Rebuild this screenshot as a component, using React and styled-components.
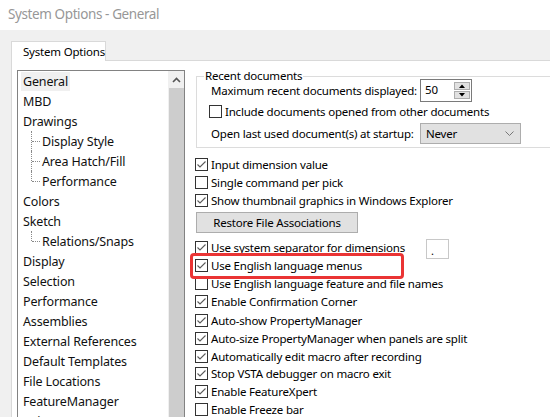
import React from 'react';
import styled, { createGlobalStyle, css } from 'styled-components';

const Global = createGlobalStyle`
  html, body { margin: 0; padding: 0; background: #fff; }
  body { font-family: "Noto Sans", "Segoe UI", sans-serif; color: #000; }
  #root { width: 550px; height: 417px; overflow: hidden; }
`;

const Window = styled.div`
  width: 550px;
  height: 417px;
  display: flex;
  flex-direction: column;
  overflow: hidden;
  background: #fff;
`;

const TitleBar = styled.div`
  height: 30px;
  flex: none;
  display: flex;
  align-items: center;
  padding-left: 8px;
  padding-bottom: 2px;
  box-sizing: border-box;
  color: #979797;
  font-size: 13.5px;
  letter-spacing: -0.4px;
`;

const Body = styled.div`
  flex: 1;
  min-height: 0;
  background: #f0f0f0;
  padding: 11px 0 0 11px;
  display: flex;
  flex-direction: column;
`;

const TabRow = styled.div`
  display: flex;
  height: 20px;
  flex: none;
`;

const Tab = styled.div`
  width: 95px;
  box-sizing: border-box;
  background: #fff;
  border: 1px solid #d9d9d9;
  border-bottom: none;
  padding-left: 11px;
  font-size: 11.5px;
  letter-spacing: -0.2px;
  line-height: 19px;
  white-space: nowrap;
`;

const TabFill = styled.div`
  flex: 1;
  border-bottom: 1px solid #d9d9d9;
`;

const Panel = styled.div`
  flex: 1;
  min-height: 0;
  background: #fff;
  border-left: 1px solid #d9d9d9;
  display: flex;
  padding: 9px 0 0 5px;
  gap: 10px;
`;

const TreeBox = styled.div`
  width: 168px;
  flex: none;
  box-sizing: border-box;
  border: 1px solid #828282;
  border-bottom: none;
  display: flex;
`;

const TreeItems = styled.div`
  flex: 1;
  display: flex;
  flex-direction: column;
`;

const TreeItem = styled.div`
  position: relative;
  height: 20px;
  flex: none;
  display: flex;
  align-items: center;
  padding-left: ${(p) => (p.$child ? 22 : 3)}px;
  font-size: 12.5px;
  letter-spacing: -0.15px;
  color: #111;
  white-space: nowrap;
  ${(p) =>
    p.$child &&
    css`
      &::before {
        content: '';
        position: absolute;
        left: 13px;
        top: 0;
        bottom: ${p.$last ? '50%' : '0'};
        border-left: 1px dotted #8a8a8a;
      }
      &::after {
        content: '';
        position: absolute;
        left: 14px;
        top: 50%;
        width: 8px;
        border-top: 1px dotted #8a8a8a;
      }
    `}
`;

const ItemLabel = styled.span`
  display: inline-block;
  height: 19px;
  line-height: 19px;
  padding: 0 2px;
  background: ${(p) => (p.$selected ? '#f0f0f0' : 'transparent')};
`;

const ScrollBar = styled.div`
  width: 16px;
  flex: none;
  display: flex;
  flex-direction: column;
  background: #f0f0f0;
`;

const ScrollArrow = styled.div`
  height: 17px;
  flex: none;
  display: flex;
  align-items: center;
  justify-content: center;
`;

const ScrollThumb = styled.div`
  flex: 1;
  margin-left: 1px;
  background: #cdcdcd;
`;

const RightPane = styled.div`
  position: relative;
  flex: 1;
  min-width: 0;
  display: flex;
  flex-direction: column;
  font-size: 11.5px;
  letter-spacing: -0.2px;
`;

const GroupBox = styled.div`
  position: relative;
  margin: 6px -20px 0 1px;
  border: 1px solid #dcdcdc;
  padding: 2px 0 3px 12px;
  display: flex;
  flex-direction: column;
`;

const Legend = styled.span`
  position: absolute;
  top: -9px;
  left: 7px;
  padding: 0 1px;
  background: #fff;
  line-height: 16px;
`;

const FieldRow = styled.div`
  display: flex;
  align-items: center;
  height: ${(p) => p.$h || 18}px;
  margin-top: ${(p) => p.$mt || 0}px;
  white-space: nowrap;
`;

const FieldLabel = styled.span`
  width: 211px;
  flex: none;
  padding-left: 2px;
  box-sizing: border-box;
`;

const Spinner = styled.div`
  width: 52px;
  height: 23px;
  box-sizing: border-box;
  border: 1px solid #7a7a7a;
  display: flex;
  background: #fff;
`;

const SpinValue = styled.span`
  flex: 1;
  padding-left: 4px;
  line-height: 19px;
`;

const SpinButtons = styled.div`
  width: 16px;
  display: flex;
  flex-direction: column;
  gap: 1px;
  padding: 2px 1px 0 0;
`;

const SpinButton = styled.div`
  height: 8px;
  box-sizing: border-box;
  border: 1px solid #adadad;
  background: #e1e1e1;
  display: flex;
  align-items: center;
  justify-content: center;
`;

const Select = styled.div`
  width: 101px;
  height: 21px;
  box-sizing: border-box;
  border: 1px solid #adadad;
  background: #e1e1e1;
  display: flex;
  align-items: center;
  justify-content: space-between;
  padding: 0 6px 0 5px;
`;

const CheckList = styled.div`
  display: flex;
  flex-direction: column;
  margin-top: 7px;
`;

const CheckRow = styled.div`
  display: flex;
  align-items: center;
  gap: 3px;
  height: ${(p) => p.$h || 18}px;
  margin-top: ${(p) => p.$mt || 0}px;
  white-space: nowrap;
`;

const Box = styled.span`
  width: 13px;
  height: 13px;
  box-sizing: border-box;
  border: 1px solid #333;
  background: #fff;
  flex: none;
  display: flex;
  align-items: center;
  justify-content: center;
`;

const SepRow = styled.div`
  display: grid;
  grid-template-columns: 231px 23px;
  align-items: start;
  height: 18px;
  margin-top: 5px;
`;

const SepBox = styled.span`
  width: 23px;
  height: 20px;
  box-sizing: border-box;
  margin-top: 1px;
  border: 1px solid #c8c8c8;
  font-size: 11px;
  line-height: 22px;
  padding-left: 4px;
`;

const PushButton = styled.div`
  width: 162px;
  height: 21px;
  box-sizing: border-box;
  margin: 3px 0 0 1px;
  border: 1px solid #adadad;
  background: #e1e1e1;
  display: flex;
  align-items: center;
  justify-content: center;
`;

const Highlight = styled.div`
  position: absolute;
  left: -5px;
  top: 183px;
  width: 214px;
  height: 26px;
  box-sizing: border-box;
  border: 3px solid #ea3434;
  border-radius: 4px;
  pointer-events: none;
`;

const Check = ({ checked }) => (
  <Box>
    {checked && (
      <svg width="11" height="11" viewBox="0 0 11 11">
        <polyline points="1.5,5.5 4,8 9.5,2.5" fill="none" stroke="#5a5a5a" strokeWidth="1.1" />
      </svg>
    )}
  </Box>
);

const CheckItem = ({ checked, children, h, mt }) => (
  <CheckRow $h={h} $mt={mt}>
    <Check checked={checked} />
    <span>{children}</span>
  </CheckRow>
);

const tree = [
  { label: 'General', selected: true },
  { label: 'MBD' },
  { label: 'Drawings' },
  { label: 'Display Style', child: true },
  { label: 'Area Hatch/Fill', child: true },
  { label: 'Performance', child: true, last: true },
  { label: 'Colors' },
  { label: 'Sketch' },
  { label: 'Relations/Snaps', child: true, last: true },
  { label: 'Display' },
  { label: 'Selection' },
  { label: 'Performance' },
  { label: 'Assemblies' },
  { label: 'External References' },
  { label: 'Default Templates' },
  { label: 'File Locations' },
  { label: 'FeatureManager' },
  { label: 'Spin Box Increments' },
];

const firstGroup = [
  { label: 'Use system separator for dimensions', checked: true, sep: true },
  { label: 'Use English language menus', checked: true },
  { label: 'Use English language feature and file names', checked: false },
  { label: 'Enable Confirmation Corner', checked: true },
];

const secondGroup = [
  { label: 'Auto-show PropertyManager', checked: true },
  { label: 'Auto-size PropertyManager when panels are split', checked: true },
  { label: 'Automatically edit macro after recording', checked: true },
  { label: 'Stop VSTA debugger on macro exit', checked: true },
  { label: 'Enable FeatureXpert', checked: true },
  { label: 'Enable Freeze bar', checked: false },
];

export default function App() {
  return (
    <>
      <Global />
      <Window>
        <TitleBar>System Options - General</TitleBar>
        <Body>
          <TabRow>
            <Tab>System Options</Tab>
            <TabFill />
          </TabRow>
          <Panel>
            <TreeBox>
              <TreeItems>
                {tree.map((t, i) => (
                  <TreeItem key={i} $child={t.child} $last={t.last}>
                    <ItemLabel $selected={t.selected}>{t.label}</ItemLabel>
                  </TreeItem>
                ))}
              </TreeItems>
              <ScrollBar>
                <ScrollArrow>
                  <svg width="9" height="6" viewBox="0 0 9 6">
                    <polyline points="1,5 4.5,1.5 8,5" fill="none" stroke="#555" strokeWidth="1.6" />
                  </svg>
                </ScrollArrow>
                <ScrollThumb />
              </ScrollBar>
            </TreeBox>
            <RightPane>
              <GroupBox>
                <Legend>Recent documents</Legend>
                <FieldRow $h={23}>
                  <FieldLabel>Maximum recent documents displayed:</FieldLabel>
                  <Spinner>
                    <SpinValue>50</SpinValue>
                    <SpinButtons>
                      <SpinButton>
                        <svg width="6" height="4" viewBox="0 0 6 4">
                          <polygon points="0,4 3,0.5 6,4" fill="#000" />
                        </svg>
                      </SpinButton>
                      <SpinButton>
                        <svg width="6" height="4" viewBox="0 0 6 4">
                          <polygon points="0,0 6,0 3,3.5" fill="#000" />
                        </svg>
                      </SpinButton>
                    </SpinButtons>
                  </Spinner>
                </FieldRow>
                <CheckItem checked={false}>Include documents opened from other documents</CheckItem>
                <FieldRow $h={21} $mt={3}>
                  <FieldLabel>Open last used document(s) at startup:</FieldLabel>
                  <Select>
                    <span>Never</span>
                    <svg width="9" height="5" viewBox="0 0 9 5">
                      <polyline points="0.5,0.5 4.5,4.5 8.5,0.5" fill="none" stroke="#777" strokeWidth="1" />
                    </svg>
                  </Select>
                </FieldRow>
              </GroupBox>
              <CheckList>
                <CheckItem checked>Input dimension value</CheckItem>
                <CheckItem checked={false}>Single command per pick</CheckItem>
                <CheckItem checked>Show thumbnail graphics in Windows Explorer</CheckItem>
                <PushButton>Restore File Associations</PushButton>
                {firstGroup.map((c, i) =>
                  c.sep ? (
                    <SepRow key={i}>
                      <CheckRow>
                        <Check checked={c.checked} />
                        <span>{c.label}</span>
                      </CheckRow>
                      <SepBox>.</SepBox>
                    </SepRow>
                  ) : (
                    <CheckItem key={i} checked={c.checked}>
                      {c.label}
                    </CheckItem>
                  )
                )}
                {secondGroup.map((c, i) => (
                  <CheckItem key={i} checked={c.checked} h={17.7} mt={i === 0 ? 2 : 0}>
                    {c.label}
                  </CheckItem>
                ))}
              </CheckList>
              <Highlight />
            </RightPane>
          </Panel>
        </Body>
      </Window>
    </>
  );
}
